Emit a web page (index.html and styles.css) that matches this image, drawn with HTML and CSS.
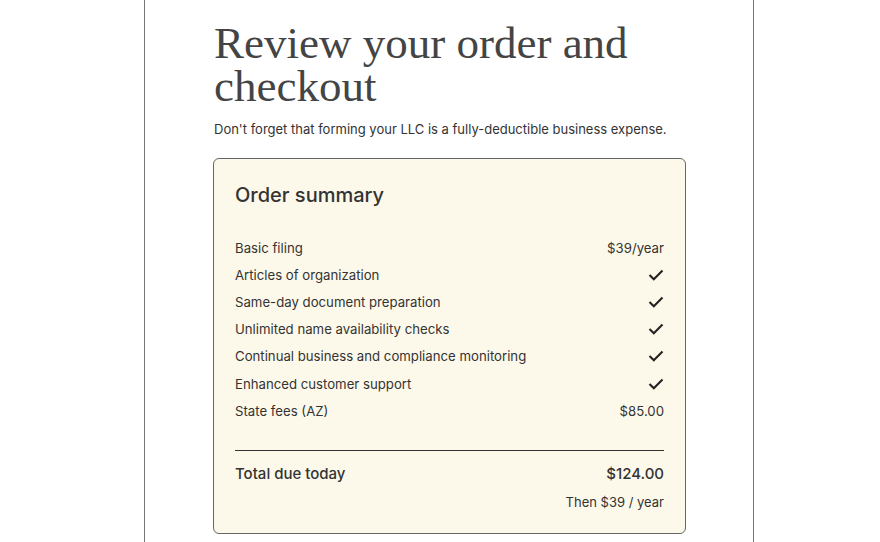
FILE: index.html
```html
<!DOCTYPE html>
<html lang="en">
<head>
    <meta charset="UTF-8">
    <meta name="viewport" content="width=device-width, initial-scale=1.0">
    <title>Review your order</title>
    <link rel="stylesheet" href="styles.css">
</head>
<body>

    <div class="page">
        <div class="content">
            <h1>Review your order and checkout</h1>
            <p class="lead">Don't forget that forming your LLC is a fully-deductible business expense.</p>

            <div class="summary">
                <h2>Order summary</h2>

                <ul class="items">
                    <li><span>Basic filing</span><span>$39/year</span></li>
                    <li><span>Articles of organization</span><svg class="check" viewBox="0 0 16 12"><path d="M1.5 6 L5.8 10.2 L14.5 1.6"/></svg></li>
                    <li><span>Same-day document preparation</span><svg class="check" viewBox="0 0 16 12"><path d="M1.5 6 L5.8 10.2 L14.5 1.6"/></svg></li>
                    <li><span>Unlimited name availability checks</span><svg class="check" viewBox="0 0 16 12"><path d="M1.5 6 L5.8 10.2 L14.5 1.6"/></svg></li>
                    <li><span>Continual business and compliance monitoring</span><svg class="check" viewBox="0 0 16 12"><path d="M1.5 6 L5.8 10.2 L14.5 1.6"/></svg></li>
                    <li><span>Enhanced customer support</span><svg class="check" viewBox="0 0 16 12"><path d="M1.5 6 L5.8 10.2 L14.5 1.6"/></svg></li>
                    <li><span>State fees (AZ)</span><span>$85.00</span></li>
                </ul>

                <div class="total">
                    <span>Total due today</span><span>$124.00</span>
                </div>
                <div class="then">Then $39 / year</div>
            </div>
        </div>
    </div>

</body>
</html>
```

FILE: styles.css
```css
body {
    margin: 0;
    background-color: #fff;
    font-family: Inter, "Liberation Sans", Arial, sans-serif;
    color: #333;
}
.page {
    margin-left: 144px;
    width: 608px;
    min-height: 542px;
    border-left: 1px solid #777;
    border-right: 1px solid #777;
}
.content {
    padding: 22px 0 0 68px;
    width: 473px;
}
h1 {
    font-family: "Liberation Serif", "Times New Roman", serif;
    font-weight: normal;
    font-size: 45px;
    line-height: 43px;
    margin: 0 0 0 1px;
    color: #444;
}
.lead {
    font-size: 13px;
    margin: 12px 0 0 1px;
    line-height: 18px;
}
.summary {
    margin-top: 20px;
    background-color: #fdf9ea;
    border: 1px solid #666;
    border-radius: 6px;
    padding: 22px 21px 22px 21px;
}
h2 {
    font-size: 20px;
    font-weight: 500;
    margin: 0;
    line-height: 28px;
}
.items {
    list-style: none;
    margin: 25px 0 0 0;
    padding: 0;
}
.items li {
    display: flex;
    justify-content: space-between;
    align-items: center;
    font-size: 13.2px;
    height: 27.2px;
}
.check {
    width: 16px;
    height: 12px;
    fill: none;
    stroke: #222;
    stroke-width: 2.1;
}
.total {
    display: flex;
    justify-content: space-between;
    margin-top: 26px;
    padding-top: 13px;
    border-top: 1px solid #333;
    font-size: 15px;
    font-weight: 500;
    line-height: 20px;
}
.then {
    text-align: right;
    font-size: 13px;
    margin-top: 9px;
    line-height: 18px;
}
```
